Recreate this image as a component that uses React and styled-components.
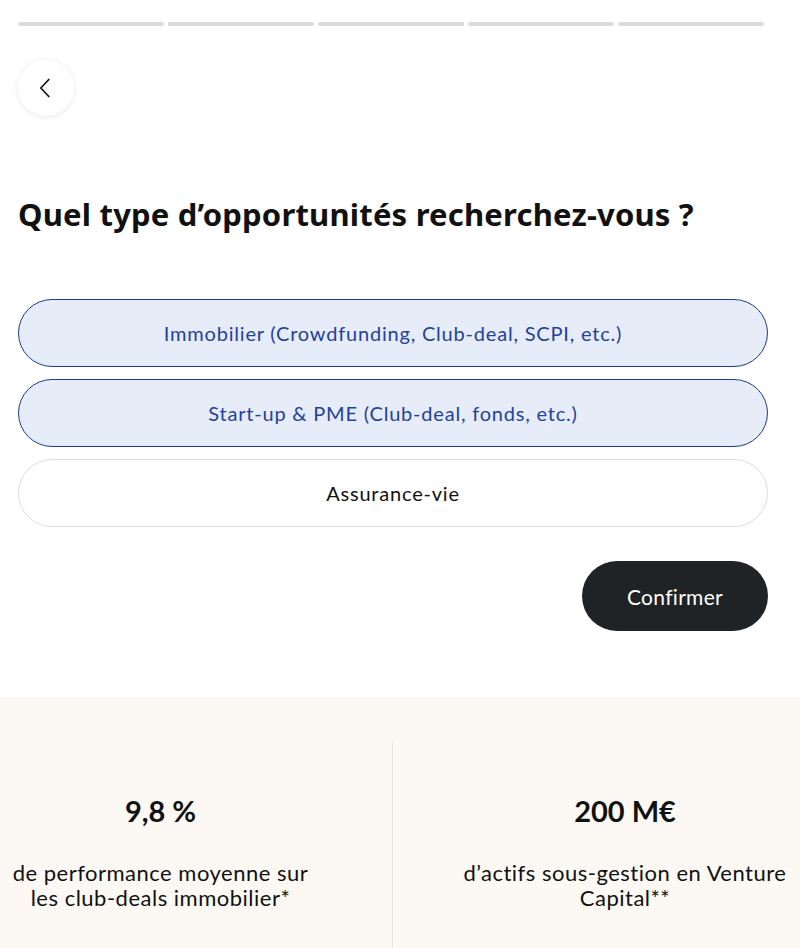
import React, { useState } from 'react'
import styled, { createGlobalStyle } from 'styled-components'

const GlobalStyle = createGlobalStyle`
  * { box-sizing: border-box; }
  body {
    margin: 0;
    background: #ffffff;
    font-family: Lato, "Open Sans", Arial, sans-serif;
    color: #111111;
    overflow: hidden;
  }
`

const options = [
  'Immobilier (Crowdfunding, Club-deal, SCPI, etc.)',
  'Start-up & PME (Club-deal, fonds, etc.)',
  'Assurance-vie',
]

const stats = [
  { value: '9,8 %', label: ['de performance moyenne sur', 'les club-deals immobilier*'] },
  { value: '200 M€', label: ['d’actifs sous-gestion en Venture', 'Capital**'] },
]

const App = () => {
  const [selected, setSelected] = useState([0, 1])

  const toggle = (i) =>
    setSelected((s) => (s.includes(i) ? s.filter((x) => x !== i) : [...s, i]))

  return (
    <Page>
      <GlobalStyle />
      <Main>
        <Progress>
          {[0, 1, 2, 3, 4].map((i) => (
            <Step key={i} />
          ))}
        </Progress>

        <BackButton aria-label="Retour">
          <svg width="20" height="20" viewBox="0 0 20 20" fill="none">
            <path d="M12.8 1.5 4.8 10l8 8.5" stroke="#111" strokeWidth="1.7" strokeLinecap="round" strokeLinejoin="round" />
          </svg>
        </BackButton>

        <Title>Quel type d’opportunités recherchez-vous ?</Title>

        <Options>
          {options.map((o, i) => (
            <Option key={o} $active={selected.includes(i)} onClick={() => toggle(i)}>
              {o}
            </Option>
          ))}
        </Options>

        <Actions>
          <Confirm>Confirmer</Confirm>
        </Actions>
      </Main>

      <Stats>
        <Track>
          {stats.map((s, i) => (
            <Stat key={s.value} $first={i === 0}>
              <Value>{s.value}</Value>
              <Label>
                {s.label.map((l) => (
                  <Line key={l}>{l}</Line>
                ))}
              </Label>
            </Stat>
          ))}
        </Track>
      </Stats>
    </Page>
  )
}

const Page = styled.div`
  width: 100%;
  min-height: 948px;
  display: flex;
  flex-direction: column;
`

const Main = styled.div`
  padding: 22px 32px 66px 18px;
  display: flex;
  flex-direction: column;
`

const Progress = styled.div`
  display: grid;
  grid-template-columns: repeat(5, 146px);
  gap: 4px;
`

const Step = styled.div`
  height: 4px;
  border-radius: 2px;
  background: #dadada;
`

const BackButton = styled.button`
  margin-top: 34px;
  width: 56px;
  height: 56px;
  border-radius: 50%;
  border: none;
  background: #ffffff;
  box-shadow: 0 1px 6px rgba(0, 0, 0, 0.09);
  display: flex;
  align-items: center;
  justify-content: center;
  padding: 0;
  cursor: pointer;
`

const Title = styled.h1`
  margin: 78px 0 0;
  font-family: "Noto Sans", Inter, sans-serif;
  font-weight: 700;
  font-size: 31px;
  line-height: 40px;
  letter-spacing: 0.2px;
  color: #111111;
`

const Options = styled.div`
  margin-top: 65px;
  display: flex;
  flex-direction: column;
  gap: 12px;
`

const Option = styled.button`
  height: 68px;
  width: 100%;
  border-radius: 34px;
  border: 1px solid ${(p) => (p.$active ? '#1b3c99' : '#dedede')};
  background: ${(p) => (p.$active ? '#e6ecf8' : '#ffffff')};
  color: ${(p) => (p.$active ? '#1f41a3' : '#111111')};
  font-family: Lato, "Open Sans", sans-serif;
  font-size: 20px;
  letter-spacing: 0.8px;
  text-align: center;
  cursor: pointer;
`

const Actions = styled.div`
  margin-top: 34px;
  display: flex;
  justify-content: flex-end;
`

const Confirm = styled.button`
  width: 186px;
  height: 70px;
  border-radius: 35px;
  border: none;
  background: #1f2326;
  color: #ffffff;
  font-family: Lato, "Open Sans", sans-serif;
  font-size: 21px;
  letter-spacing: 0.3px;
  cursor: pointer;
`

const Stats = styled.section`
  flex: 1;
  background: #fcf9f5;
  padding-top: 45px;
  overflow: hidden;
`

const Track = styled.div`
  display: flex;
  margin-left: -71px;
`

const Stat = styled.div`
  flex: 0 0 464px;
  min-height: 210px;
  padding: 51px 6px 0;
  text-align: center;
  border-right: ${(p) => (p.$first ? '1px solid #e9e5df' : 'none')};
`

const Value = styled.div`
  font-family: Lato, "Open Sans", sans-serif;
  font-weight: 700;
  font-size: 29px;
  line-height: 36px;
  color: #111111;
`

const Label = styled.p`
  margin: 31px 0 0;
  font-family: Lato, "Open Sans", sans-serif;
  font-size: 22px;
  line-height: 25px;
  letter-spacing: 0.5px;
  color: #111111;
`

const Line = styled.span`
  display: block;
  white-space: nowrap;
`

export default App
